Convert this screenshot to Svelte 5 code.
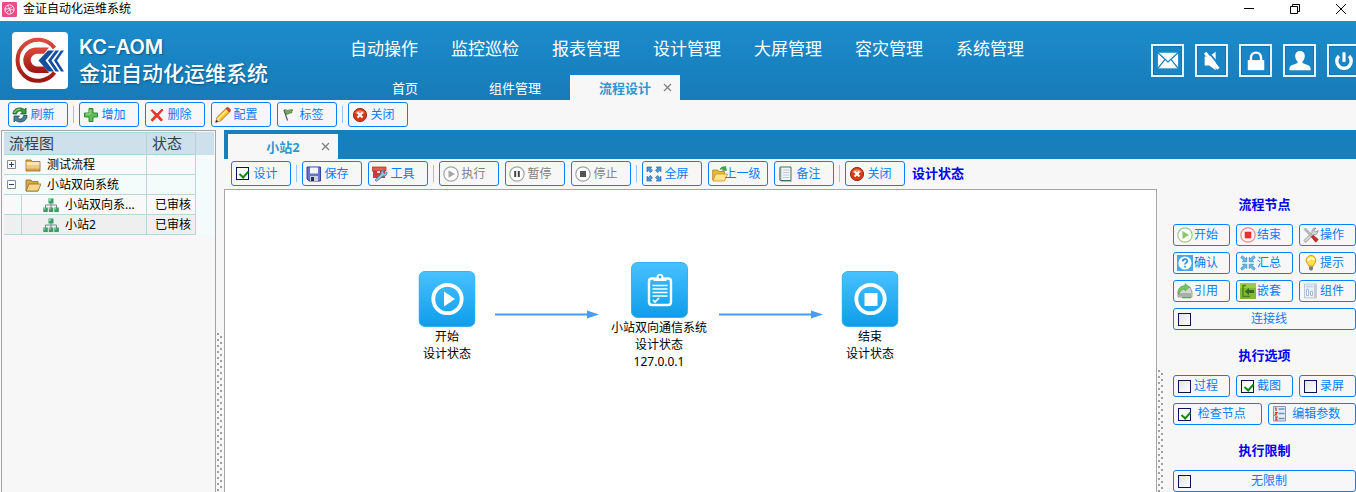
<script>
  const menus = ['自动操作', '监控巡检', '报表管理', '设计管理', '大屏管理', '容灾管理', '系统管理'];

  const mainTools = [
    { icon: 'refresh', text: '刷新' },
    null,
    { icon: 'plus', text: '增加' },
    { icon: 'cross', text: '删除' },
    { icon: 'pencil', text: '配置' },
    { icon: 'flag', text: '标签' },
    null,
    { icon: 'close', text: '关闭' }
  ];

  const designTools = [
    { check: true, text: '设计' },
    null,
    { icon: 'save', text: '保存' },
    { icon: 'toolbox', text: '工具' },
    null,
    { icon: 'play', text: '执行', disabled: true },
    { icon: 'pause', text: '暂停', disabled: true },
    { icon: 'stop', text: '停止', disabled: true },
    null,
    { icon: 'expand', text: '全屏' },
    { icon: 'up', text: '上一级' },
    { icon: 'note', text: '备注' },
    null,
    { icon: 'close', text: '关闭' }
  ];

  const nodeTools = [
    { icon: 'start', text: '开始' },
    { icon: 'end', text: '结束' },
    { icon: 'wrench', text: '操作' },
    { icon: 'confirm', text: '确认' },
    { icon: 'collapse', text: '汇总' },
    { icon: 'bulb', text: '提示' },
    { icon: 'link', text: '引用' },
    { icon: 'embed', text: '嵌套' },
    { icon: 'server', text: '组件' }
  ];

  const options = [
    { check: false, text: '过程' },
    { check: true, text: '截图' },
    { check: false, text: '录屏' }
  ];

  const nodes = [
    { x: 222, y: 81, icon: 'play', lines: ['开始', '设计状态'] },
    { x: 434, y: 72, icon: 'clip', lines: ['小站双向通信系统', '设计状态', '127.0.0.1'] },
    { x: 645, y: 81, icon: 'stop', lines: ['结束', '设计状态'] }
  ];
  const arrows = [{ x: 270, y: 119 }, { x: 494, y: 119 }];
</script>

{#snippet icon(name)}
  <svg class="ico" viewBox="0 0 16 16" aria-hidden="true">
    {#if name === 'refresh'}
      <path d="M1 7C1 3 4 1 8 1c2 0 3 .6 4.300 1.600L14 1v6H8.500l2-2C8 3 5 4 4.500 7z" fill="#35a23c" stroke="#17562a" stroke-width=".8" />
      <path d="M15 8.500c0 4-3 6.500-7 6.500-2 0-3.300-.7-4.300-1.700L2 15V9h5.500l-2 2c2.500 2 5.500 1 6-2.500z" fill="#3f8593" stroke="#1d4656" stroke-width=".8" />
      <path d="M2.500 6C3 3.500 5 2.300 8 2.300" stroke="#9be08f" fill="none" />
    {:else if name === 'plus'}
      <path d="M6 1.500h4V6h4.500v4H10v4.500H6V10H1.500V6H6z" fill="#5fbf55" stroke="#2f8b32" />
      <path d="M7 3v4H3" stroke="#a9e29b" fill="none" />
    {:else if name === 'cross'}
      <path d="M3 2.500 8 7l5-5 1 1-4.500 5.200L13.500 13 12 14 8 9.800 3.500 14.200 2 13l4.300-4.800L2 3.500z" fill="#ee3b24" stroke="#c81e10" stroke-width=".7" />
    {:else if name === 'pencil'}
      <path d="M.7 15.300 2 10.500 11 1.500 14.500 5 5.500 14z" fill="#ffc928" stroke="#a85b12" stroke-width=".9" />
      <path d="M3.500 11.500 12 3" stroke="#fff3a0" stroke-width="1.300" />
      <path d="m11 1.500 1.200-1c.8-.5 3.700 2 3.200 3.300L14.500 5z" fill="#e34b3e" stroke="#98251f" stroke-width=".7" />
      <path d="m2 10.500 3.500 3.500-3.300.9-1-1z" fill="#f6dcb0" />
      <path d="m.7 15.300.8-2.600 1.800 1.700z" fill="#222" />
    {:else if name === 'flag'}
      <path d="M3 3 6.500 13.500" stroke="#4a5568" stroke-width="1.200" />
      <path d="M3 3c2-1.200 3 1 4.500.3S10.300 2.500 12 3c-1.300.8-1.300 1.700-1.200 2.800C9 5.500 7.500 7.500 4.700 7.300z" fill="#77a95f" stroke="#3c6b3a" stroke-width=".7" />
    {:else if name === 'close'}
      <circle cx="8" cy="8" r="6.600" fill="#d63a17" stroke="#95301c" />
      <path d="M3 6a5.500 4.500 0 0 1 10 0c-3 1.500-7 1.500-10 0z" fill="#f08a66" />
      <path d="m5.500 5.500 5 5m0-5-5 5" stroke="#fff" stroke-width="2.100" />
    {:else if name === 'save'}
      <path d="M1 1h13.500v14H3l-2-2z" fill="#6a72c8" stroke="#3a4196" />
      <path d="M4 1.500h8v6H4z" fill="#f2f5fb" />
      <path d="M4 10h8v5H4z" fill="#c7cede" />
      <path d="M5 11h3v4H5z" fill="#252b62" />
    {:else if name === 'toolbox'}
      <path d="M1 3h12v9H1z" fill="#d13a3a" />
      <path d="M0 1h14v4H0z" fill="#e75b52" stroke="#a82626" stroke-width=".7" />
      <path d="M5 5h3v2H5z" fill="#f7d0c8" />
      <path d="M4.500 15.500 3 14l6-6c-.5-2 1-4 3.500-4L11 6l1.500 1.500L15 6c.5 2.500-1.500 4.500-4 4z" fill="#8ec0e4" stroke="#4678a0" stroke-width=".8" />
    {:else if name === 'play' || name === 'pause' || name === 'stop'}
      <circle cx="8" cy="8" r="7.200" fill="#fff" stroke="#a3a3a3" stroke-width="1.200" />
      {#if name === 'play'}
        <path d="M5.500 4.200v7.600L12 8z" fill="#a6a6a6" />
      {:else if name === 'pause'}
        <path d="M5.200 5h2v6h-2zm3.600 0h2v6h-2z" fill="#444" />
      {:else}
        <path d="M5 5h6v6H5z" fill="#555" />
      {/if}
    {:else if name === 'expand'}
      <g fill="#4d9ad6" stroke="#1f66a5" stroke-width=".7">
        {#each [0, 90, 180, 270] as a}
          <path transform="rotate({a} 8 8)" d="M1 1h4.700L4.500 2.300l2 2-2.200 2.200-2-2L1 5.700z" />
        {/each}
      </g>
    {:else if name === 'collapse'}
      <g fill="#6bb9e6" stroke="#2b7fb9" stroke-width=".6">
        {#each [0, 90, 180, 270] as a}
          <path transform="rotate({a} 8 8)" d="M6.800 6.800H2.300L3.700 5.400.7 2.400l1.700-1.700 3 3L6.800 2.300z" />
        {/each}
      </g>
    {:else if name === 'up'}
      <path d="M.7 4h5l1.300 1.500h5.500V14H.7z" fill="#e9b93f" stroke="#b08420" stroke-width=".8" />
      <path d="M3.500 8h12L12.500 15H1z" fill="#ffe58a" stroke="#c19428" stroke-width=".8" />
      <path d="M8 3.500C9 1 11 .5 12.500 1L13.500 0l1 4.500-4.300-.3L11.300 3C10 2.600 9 3 8 3.500z" fill="#46ab46" stroke="#237a2b" stroke-width=".5" />
    {:else if name === 'note'}
      <path d="M2 1h11v13.500H2z" fill="#f1f4f8" stroke="#3f7460" />
      <path d="M5 4h6.500M5 6.500h6.500M5 9h6.500M5 11.500h6.500" stroke="#c2cbd9" />
      <path d="M1 3h2.500M1 5h2.500M1 7h2.500M1 9h2.500M1 11h2.500M1 13h2.500" stroke="#777" stroke-width=".8" />
      <path d="M3 15.500h11" stroke="#bbb" />
    {:else if name === 'start'}
      <circle cx="8" cy="8" r="7.200" fill="#fbfff8" stroke="#9ccb82" stroke-width="1.200" />
      <path d="M5.500 4v8L12 8z" fill="#8cc56c" />
    {:else if name === 'end'}
      <circle cx="8" cy="8" r="7.200" fill="#fff6f5" stroke="#e98888" stroke-width="1.200" />
      <path d="M4.700 4.700h6.600v6.600H4.700z" fill="#ea2f2f" />
    {:else if name === 'wrench'}
      <path d="m1 13.500 8-8C8.500 3 10.500.8 13 1l-2 2.300L12.500 5l2.500-1.500c.3 2.500-1.800 4.500-4.300 4l-8 8z" fill="#d8d8d8" stroke="#858585" stroke-width=".8" />
      <path d="m1 2.500 1.500-1.500L10 8.500 8.500 10z" fill="#bbb" stroke="#888" stroke-width=".5" />
      <path d="m8.500 10 1.700-1.700 5 4.200-2.500 2.700z" fill="#cf2f2b" stroke="#8e1717" stroke-width=".7" />
    {:else if name === 'confirm'}
      <path d="M0 0h16v16H0z" fill="#4aa6ea" />
      <circle cx="8" cy="8" r="6.600" fill="#fff" />
      <path d="M5.700 6.500C5.700 3.500 10.300 3.500 10.300 6.200 10.300 7.800 8 7.600 8 9.500m0 1.200v1.700" stroke="#2e8dd6" stroke-width="1.700" fill="none" />
    {:else if name === 'bulb'}
      <path d="M5.500 11c0-2-2.300-3-2.300-5.700a4.800 4.800 0 0 1 9.600 0C12.800 8 10.500 9 10.500 11z" fill="#ffe04a" stroke="#d99b12" />
      <path d="M5.300 6c0-1.800 1.200-2.800 3-2.800 1.200 0 2.300.7 2.500 2" stroke="#fffbd0" stroke-width="2" fill="none" />
      <path d="M6 11.500h4v2.200L9 15.500H7l-1-1.800z" fill="#7c7c7c" />
    {:else if name === 'link'}
      <path d="M1 9 4 4h9l2 5v5H1z" fill="#d3d6d5" stroke="#818584" stroke-width=".7" />
      <path d="M2 10h12v3H2z" fill="#a9adac" />
      <path d="M1.500 11.500C0 5.500 4 2.500 8 2.700V.5l4.500 3.700L8 8V6C5 6 3 8 1.500 11.500z" fill="#74c95a" stroke="#3b8c2c" stroke-width=".5" />
      <path d="M5 14.500h9" stroke="#59a94a" stroke-width="1.500" />
    {:else if name === 'embed'}
      <path d="M0 0h16v16H0z" fill="#7dbb31" />
      <path d="M0 0h16v5H0z" fill="#97cc4d" />
      <path d="M3 2.500h3M3 2v11.500h7" stroke="#4d8420" stroke-width="1.500" fill="none" />
      <path d="m5 8.500 4-3.700V7h5v3H9v2.200z" fill="#3a6a1a" />
    {:else if name === 'server'}
      <path d="M1.500 1h12v14h-12z" fill="#e9eef3" stroke="#b4bec8" stroke-width=".8" />
      <path d="M11 1.500h2.500v13H11z" fill="#c3cdd6" />
      <path d="M3 3.500h7" stroke="#c3d0dc" stroke-width="1.500" />
      <path d="M3.500 6.500h2v6h-2zM7.500 8.500h2v4h-2z" stroke="#a9bccd" fill="#fff" />
    {:else if name === 'params'}
      <path d="M1.500.5h12v14.500h-12z" fill="#e4ebf5" stroke="#8798af" />
      <path d="M6.500 3h6M6.500 7.500h6M6.500 12.500h6" stroke="#6e93bb" stroke-width="1.500" />
      <path d="M3 2h1v3m-1 1.500h2L3 9h2m-2 2h2L4 12.500l1 1.500H3" stroke="#cb3030" stroke-width="1.200" fill="none" />
    {:else if name === 'folder'}
      <path d="M1 3h5l1.300 1.500H15V14H1z" fill="#d9a646" stroke="#8f6a28" stroke-width=".8" />
      <path d="M1.500 5h13v3h-13z" fill="#f9e5ae" />
      <path d="M1.500 8h13v3.500h-13z" fill="#efca78" />
    {:else if name === 'open'}
      <path d="M1 3h5l1.300 1.500H13V14H1z" fill="#d9a646" stroke="#8f6a28" stroke-width=".8" />
      <path d="M4 7h12l-3 7H1.200z" fill="#f7d787" stroke="#8f6a28" stroke-width=".8" />
    {:else if name === 'tree'}
      <path d="M8 5v3M2.500 11V8h11v3M8 8v3" stroke="#6f8f80" fill="none" />
      <path d="M5.500 1.500h5v5h-5zM.3 10.500h4.500V15H.3zm5.500 0h4.500V15H5.800zm5.500 0h4.500V15h-4.500z" fill="#3d9c66" />
      <path d="M6 2h2v2H6zM.8 11h1.500v1.500H.8zm5.500 0h1.500v1.500H6.300zm5.500 0h1.500v1.500h-1.500z" fill="#8fd0a8" />
    {/if}
  </svg>
{/snippet}

{#snippet tool(t)}
  {#if t.check !== undefined}
    <label class="btn"><input type="checkbox" checked={t.check} /><span class="txt">{t.text}</span></label>
  {:else}
    <button class="btn" disabled={t.disabled}>{@render icon(t.icon)}<span class="txt">{t.text}</span></button>
  {/if}
{/snippet}

{#snippet bar(items)}
  {#each items as t}
    {#if t}{@render tool(t)}{:else}<i class="sep"></i>{/if}
  {/each}
{/snippet}

{#snippet closeMark()}
  <svg class="x" viewBox="0 0 9 9" aria-hidden="true"><path d="m1 1 7 7m0-7-7 7" stroke="#808080" stroke-width="1.300" /></svg>
{/snippet}

{#snippet expander(open)}
  <svg class="pm" viewBox="0 0 9 9" aria-hidden="true">
    <path d="M.5.5h8v8h-8z" fill="#fff" stroke="#8a8a8a" />
    <path d={open ? 'M2 4.500h5' : 'M2 4.500h5M4.500 2v5'} stroke="#2b3c78" />
  </svg>
{/snippet}

<div class="app">
  <div class="titlebar">
    <svg class="appicon" viewBox="0 0 15 15" aria-hidden="true">
      <rect width="15" height="15" rx="1" fill="#ea4c89" />
      <circle cx="7.500" cy="7.500" r="4.600" fill="none" stroke="#fff" stroke-width=".9" />
      <path d="M5.500 3.500c2 2.500 3 5 3.500 8M3 7c3.500 0 6-.6 8-3M4.500 11c1.500-3 4-4 7.500-3" stroke="#fff" stroke-width=".8" fill="none" />
    </svg>
    <span>金证自动化运维系统</span>
    <div class="winbtns">
      <button aria-label="最小化"><svg viewBox="0 0 12 12"><path d="M1 5.500h10" /></svg></button>
      <button aria-label="还原"><svg viewBox="0 0 12 12"><path d="M1.500 3.500h7v7h-7zM3.500 3V1.500h7v7H9" /></svg></button>
      <button aria-label="关闭"><svg viewBox="0 0 12 12"><path d="m1 1 10 10M11 1 1 11" /></svg></button>
    </div>
  </div>

  <header>
    <svg class="logo" viewBox="0 0 56 57" aria-hidden="true">
      <defs>
        <linearGradient id="red" x2="0" y2="1"><stop stop-color="#dc4a3c" /><stop offset="1" stop-color="#9c1511" /></linearGradient>
      </defs>
      <rect width="56" height="57" rx="4" fill="#fff" />
      <path d="M42.500 16A20.500 20.500 0 1 0 42.500 40.500" fill="none" stroke="url(#red)" stroke-width="4" />
      <path d="M37 15.500H24a12.700 12.700 0 0 0 0 25.400h13l-5-6.500h-7a6.300 6.300 0 0 1 0-12.600h7z" fill="url(#red)" />
      <path d="M26.500 28.500 36 18.500h6l-8.500 10 8.500 11h-6z" fill="#124f9d" />
      <path d="m36 28.500 7.500-10H47l-7.500 10 7.500 11h-3.500zm6 0 7-10h3l-7 10 7 11h-3z" fill="#124f9d" />
    </svg>
    <div class="brand"><span class="en">KC-AOM</span><span class="cn">金证自动化运维系统</span></div>
    <div class="nav">
      <nav class="menus">{#each menus as m}<a href="#top">{m}</a>{/each}</nav>
      <div class="tabs">
        <button class="tab">首页</button>
        <button class="tab">组件管理</button>
        <button class="tab on">流程设计{@render closeMark()}</button>
      </div>
    </div>
    <div class="quick">
      <button aria-label="消息"><svg viewBox="0 0 24 24"><path d="M1 3h22v17H1z" fill="#fff" /><path d="m1 3 11 10L23 3M1 20l7.500-9.500M23 20l-7.500-9.500" stroke="#1a82c0" stroke-width="1.400" fill="none" /></svg></button>
      <button aria-label="静音"><svg viewBox="0 0 24 24"><path d="M4 7h5l7-5v20l-7-5H4z" fill="#fff" /><path d="m7 1 14 17" stroke="#1a82c0" stroke-width="2" /><path d="m4.500 3 14.500 17.500" stroke="#fff" stroke-width="3.400" /></svg></button>
      <button aria-label="锁定"><svg viewBox="0 0 24 24"><path d="M3 11h18v11H3z" fill="#fff" /><path d="M6.500 12V8.500c0-7.500 11-7.500 11 0V12" stroke="#fff" stroke-width="2.600" fill="none" /></svg></button>
      <button aria-label="用户"><svg viewBox="0 0 24 24"><path d="M12 1c3.500 0 5.500 2.600 5.200 6-.3 3-1.500 4.500-2.500 5.500V14c3 2 8.800 2.500 8.800 6v2H.5v-2c0-3.500 5.800-4 8.800-6v-1.500c-1-1-2.200-2.500-2.500-5.500C6.500 3.600 8.500 1 12 1z" fill="#fff" /></svg></button>
      <button aria-label="退出"><svg viewBox="0 0 24 24"><path d="M6.500 6.500a7.900 7.900 0 1 0 11 0" stroke="#fff" stroke-width="3.600" fill="none" /><path d="M12 2.500V13" stroke="#fff" stroke-width="3.400" /></svg></button>
    </div>
  </header>

  <div class="toolbar main">{@render bar(mainTools)}</div>

  <div class="body">
    <aside class="left">
      <table>
        <thead><tr><th>流程图</th><th>状态</th><th></th></tr></thead>
        <tbody>
          <tr>
            <td><div class="cell">{@render expander(false)}{@render icon('folder')}<span>测试流程</span></div></td>
            <td></td><td></td>
          </tr>
          <tr class="alt">
            <td><div class="cell">{@render expander(true)}{@render icon('open')}<span>小站双向系统</span></div></td>
            <td></td><td></td>
          </tr>
          <tr>
            <td><div class="cell sub">{@render icon('tree')}<span>小站双向系...</span></div></td>
            <td>已审核</td><td></td>
          </tr>
          <tr class="sel">
            <td><div class="cell sub">{@render icon('tree')}<span>小站2</span></div></td>
            <td>已审核</td><td></td>
          </tr>
        </tbody>
      </table>
    </aside>
    <div class="grip left-grip"></div>

    <main>
      <div class="doctabs"><button class="tab on">小站2{@render closeMark()}</button></div>
      <div class="toolbar">{@render bar(designTools)}<strong class="state">设计状态</strong></div>
      <div class="work">
        <div class="canvas">
          {#each arrows as a}
            <svg class="arrow" style="left:{a.x}px;top:{a.y}px" viewBox="0 0 104 10" aria-hidden="true">
              <path d="M0 5.500h93" stroke="#a3cbff" stroke-width="3" /><path d="M0 5.500h93" stroke="#4a9bff" />
              <path d="M92 1.500v8l12-4z" fill="#4a9bff" />
            </svg>
          {/each}
          {#each nodes as n}
            <div class="node" style="left:{n.x}px;top:{n.y}px">
              <svg viewBox="0 0 57 56" aria-hidden="true">
                <defs><linearGradient id="sky" x2="0" y2="1"><stop stop-color="#48c1ff" /><stop offset="1" stop-color="#0e9dea" /></linearGradient></defs>
                <rect x=".5" y=".5" width="56" height="55" rx="6" fill="url(#sky)" stroke="#3bb0ee" />
                {#if n.icon === 'clip'}
                  <path d="M23.500 16.500H21q-3 0-3 3V40q0 3 3 3h16q3 0 3-3V19.500q0-3-3-3h-2.500" fill="none" stroke="#fff" stroke-width="2.400" />
                  <path d="M22.500 19v-3.500h3c0-5 7-5 7 0h3V19z" fill="#fff" /><circle cx="29" cy="15" r="1.400" fill="#2cafee" />
                  <path d="M21.500 23.500h15m-15 3.500h15m-15 3.500h15m-15 3.500h15" stroke="#fff" stroke-width="1.700" />
                  <path d="m22 38 2 2 4-4" stroke="#fff" stroke-width="1.700" fill="none" />
                {:else}
                  <circle cx="29" cy="28" r="14.200" fill="none" stroke="#fff" stroke-width="3.800" />
                  {#if n.icon === 'play'}<path d="M25.500 20.500v15L36.500 28z" fill="#fff" />{:else}<path d="M23 22h13v13H23z" fill="#fff" />{/if}
                {/if}
              </svg>
              {#each n.lines as l}<span>{l}</span>{/each}
            </div>
          {/each}
        </div>
        <div class="grip right-grip"></div>
        <aside class="right">
          <h2>流程节点</h2>
          <div class="g3">{#each nodeTools as t}{@render tool(t)}{/each}</div>
          {@render tool({ check: false, text: '连接线' })}
          <h2>执行选项</h2>
          <div class="g3">{#each options as t}{@render tool(t)}{/each}</div>
          <div class="g2">
            {@render tool({ check: true, text: '检查节点' })}
            {@render tool({ icon: 'params', text: '编辑参数' })}
          </div>
          <h2>执行限制</h2>
          {@render tool({ check: false, text: '无限制' })}
        </aside>
      </div>
    </main>
  </div>
</div>

<style>
  :global(body) { margin: 0; overflow: hidden; }
  .app { height: 100vh; display: flex; flex-direction: column; overflow: hidden; background: #f7f7f7; color: #000; font: 12px/16px "Noto Sans", "Noto Sans CJK SC", sans-serif; }
  .app * { box-sizing: border-box; }
  button { font: inherit; color: inherit; margin: 0; padding: 0; border: 0; background: none; }
  svg { display: block; flex: none; }

  .titlebar { flex: none; height: 21px; display: flex; align-items: center; background: #fff; padding: 0 0 3px 2px; }
  .appicon { width: 15px; height: 15px; margin-right: 6px; }
  .winbtns { margin-left: auto; display: flex; gap: 34px; padding-right: 9px; }
  .winbtns svg { width: 12px; height: 12px; fill: none; stroke: #000; }

  header { flex: none; height: 79px; display: flex; background: linear-gradient(#1c8ccc, #177bb8); color: #fff; padding-left: 12px; overflow: hidden; }
  .logo { width: 56px; height: 57px; margin-top: 11px; }
  .brand { flex: none; width: 271px; margin-left: 11px; padding-top: 13px; display: flex; flex-direction: column; text-shadow: 1px 1px 2px #0b5788; white-space: nowrap; }
  .en { font: 600 20px/26px Inter, sans-serif; }
  .cn { font-size: 21px; line-height: 26px; font-weight: 500; }
  .nav { flex: none; display: flex; flex-direction: column; justify-content: space-between; }
  .menus { display: flex; padding-top: 16px; }
  .menus a { width: 101px; font-size: 17px; line-height: 24px; color: #fff; text-decoration: none; }
  .tabs { display: flex; }
  .tab { position: relative; width: 110px; height: 25px; font-size: 13px; line-height: 24px; text-align: center; }
  .tab.on { background: #f7f7f7; color: #2f98d3; font-weight: bold; }
  .x { position: absolute; right: 8px; top: 8px; width: 9px; height: 9px; }
  .quick { display: flex; gap: 11px; margin: 23px -4px 0 auto; }
  .quick button { flex: none; width: 33px; height: 33px; display: grid; place-items: center; border: 2px solid #e6f3fb; background: #1a85c5; box-shadow: inset 0 0 0 1px #1674ae; }
  .quick svg { width: 22px; height: 22px; }

  .toolbar { flex: none; height: 30px; display: flex; padding: 2px 0 0 7px; gap: 6px; }
  .main { padding-left: 8px; }
  .btn { height: 22px; display: flex; align-items: center; padding-left: 3px; border: 1px solid #0a80ff; border-radius: 3px; color: #0a7cff; min-width: 0; }
  .btn:disabled { color: #808080; }
  .toolbar .btn { flex: none; width: 60px; height: 25px; }
  .ico { width: 16px; height: 16px; margin-right: -10px; }
  .txt { flex: 1; min-width: 0; text-align: center; white-space: nowrap; position: relative; line-height: 18px; }
  .btn input { flex: none; appearance: none; width: 13px; height: 13px; margin: 0 -8px 0 1px; border: 1px solid #0b1355; background: linear-gradient(135deg, #e3e3e3, #fff); }
  .btn input:checked { background: #fff; }
  .btn input:checked::before { content: ""; display: block; width: 4px; height: 7px; margin: 1px 0 0 4px; border: solid #0b8a0b; border-width: 0 2px 2px 0; transform: rotate(42deg); }
  .sep { flex: none; width: 1px; height: 17px; margin: 4px -1px 0; background: #93c5f7; }
  .state { margin-left: 1px; font-size: 13px; line-height: 25px; color: #0000f0; }

  .left { flex: none; width: 215px; margin-left: 1px; padding: 1px 1px 0 2px; border: 1px solid #a5a5a8; border-bottom: 0; }
  .body { flex: 1; min-height: 0; display: flex; }
  table { width: 100%; border-collapse: separate; border-spacing: 0; table-layout: fixed; }
  th { height: 23px; padding: 0 0 0 5px; background: #cde0eb; text-align: left; font-size: 15px; line-height: 21px; font-weight: normal; color: #333f4a; border: solid #acd8d8; border-width: 1px 1px 1px 0; }
  th:first-child { width: 143px; }
  th:nth-child(2) { width: 49px; }
  th:last-child, td:last-child { border: 0; }
  td { height: 20px; padding: 0; border: solid #b8d8d6; border-width: 0 1px 1px 0; line-height: 18px; white-space: nowrap; background: #f9f9f9; }
  td:nth-child(2) { padding-left: 8px; }
  .alt td { background: #f4fcfb; }
  .sel td { background: #efefef; }
  td:last-child { background: #f4fbfb; }
  .cell { display: flex; align-items: center; height: 19px; padding-left: 3px; }
  .cell .ico { margin: 0 6px 0 9px; }
  .sub { margin-left: 17px; border-left: 1px solid #b8d8d6; padding-left: 12px; }
  .pm { width: 9px; height: 9px; }

  .grip { flex: none; width: 6px; background: conic-gradient(from 0deg at 2px 2px, transparent 75%, #a0a0a0 0) 0 0 / 6px 6px, conic-gradient(from 0deg at 2px 2px, transparent 75%, #a0a0a0 0) 3px 3px / 6px 6px; }
  .left-grip { margin: 203px 1px 0; }
  .right-grip { margin: 181px 9px 0 1px; }

  main { flex: 1; min-width: 0; display: flex; flex-direction: column; }
  .doctabs { flex: none; height: 29px; padding: 4px 0 0 4px; display: flex; background: #177fbc; }
  .work { flex: 1; min-height: 0; display: flex; }
  .canvas { flex: 1; min-width: 0; position: relative; overflow: hidden; background: #fff; border: 1px solid #a5a5aa; border-bottom: 0; }
  .arrow { position: absolute; width: 104px; height: 10px; }
  .node { position: absolute; transform: translateX(-50%); display: flex; flex-direction: column; align-items: center; line-height: 17px; white-space: nowrap; }
  .node svg { width: 57px; height: 56px; margin-bottom: 1px; }
  .right { flex: none; width: 183px; }
  .right h2 { margin: 11px 0 6px; font-size: 13px; line-height: 28px; color: #0000f0; text-align: center; }
  .right h2:first-child { margin-top: 1px; }
  .g3, .g2 { display: grid; gap: 6px; margin-bottom: 6px; }
  .g3 { grid-template-columns: repeat(3, 1fr); }
  .g2 { grid-template-columns: repeat(2, 1fr); }
</style>
